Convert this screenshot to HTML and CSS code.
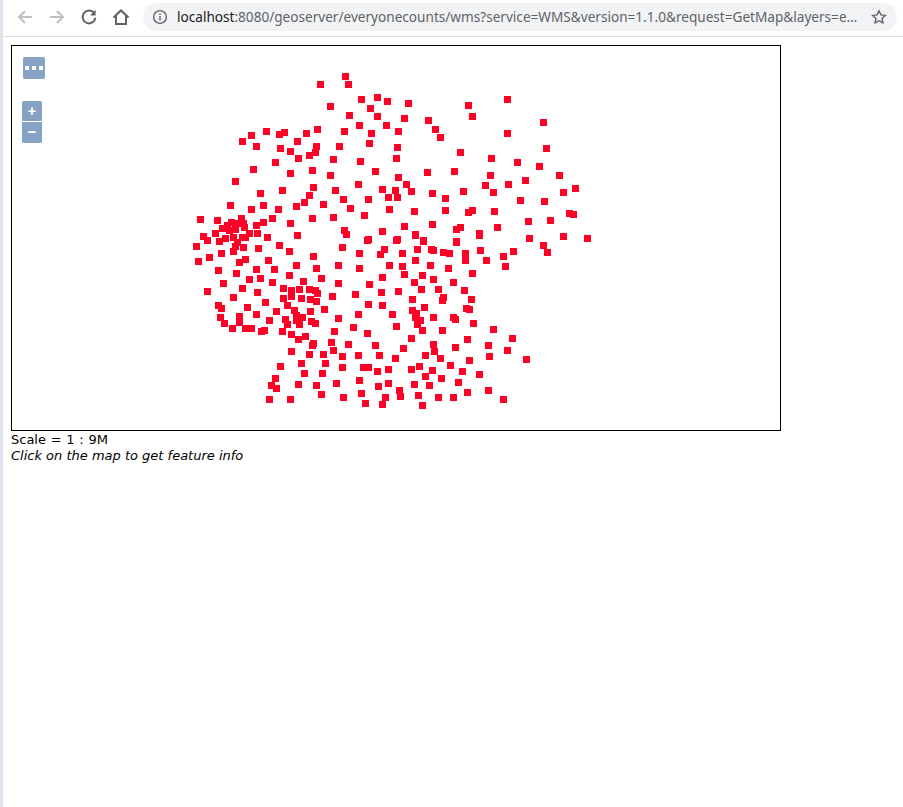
FILE: index.html
```html
<!DOCTYPE html>
<html lang="en">
<head>
    <meta charset="UTF-8">
    <meta name="viewport" content="width=device-width, initial-scale=1.0">
    <title>everyonecounts - OpenLayers map</title>
    <link rel="stylesheet" href="styles.css">
</head>
<body>
    <header class="toolbar">
        <svg class="tool-icon" viewBox="0 0 18 18"><path class="stroke-light" d="M16 9H3M9 3L3 9l6 6"/></svg>
        <svg class="tool-icon" viewBox="0 0 18 18"><path class="stroke-light" d="M2 9h13M9 3l6 6-6 6"/></svg>
        <svg class="tool-icon" viewBox="0 0 18 18"><path class="stroke-dark" d="M14.2 5.2A6.4 6.4 0 1 0 15.4 9.6"/><path class="fill-dark" d="M15.6 1.8v5.6h-5.6z"/></svg>
        <svg class="tool-icon" viewBox="0 0 18 18"><path class="stroke-dark" d="M1.5 9.5L9 2.4l7.5 7.1M4 8v8h10V8"/></svg>
        <div class="omnibox">
            <svg class="info-icon" viewBox="0 0 16 16"><circle class="info-ring" cx="8" cy="8" r="6.4"/><path class="fill-dark" d="M7.3 7h1.4v4.4H7.3zM7.3 4.4h1.4v1.5H7.3z"/></svg>
            <div class="url"><span class="url-host">localhost</span>:8080/geoserver/everyonecounts/wms?service=WMS&amp;version=1.1.0&amp;request=GetMap&amp;layers=e&hellip;</div>
            <svg class="star-icon" viewBox="0 0 16 16"><path class="stroke-star" d="M8 1.8l1.9 4.1 4.4.5-3.3 3 .9 4.5L8 11.7l-3.9 2.2.9-4.5-3.3-3 4.4-.5z"/></svg>
        </div>
    </header>

    <main class="page">
        <div class="map" id="map">
            <svg class="map-points" id="map-points" viewBox="12 46 768 384"></svg>
            <div class="map-btn map-options"><span></span><span></span><span></span></div>
            <div class="map-zoom">
                <div class="map-btn zoom-btn">+</div>
                <div class="map-btn zoom-btn">&minus;</div>
            </div>
        </div>
        <div class="scale">Scale = 1 : 9M</div>
        <div class="hint">Click on the map to get feature info</div>
    </main>

    <script src="map.js"></script>
</body>
</html>
```

FILE: styles.css
```css
html, body {
    height: 100%;
}
body {
    margin: 0;
    box-sizing: border-box;
    border-left: 3px solid #dfe3ec;
    background-color: #fff;
    color: #000;
    font-family: "DejaVu Sans", Verdana, sans-serif;
    font-size: 13px;
    line-height: 16px;
    overflow: hidden;
}
.toolbar {
    display: flex;
    align-items: center;
    gap: 14px;
    height: 34px;
    padding: 0 6px 2px 13px;
    border-bottom: 1px solid #dadce0;
}
.tool-icon {
    width: 18px;
    height: 18px;
    flex: none;
}
.stroke-light, .stroke-dark {
    fill: none;
    stroke-width: 2;
}
.stroke-light {
    stroke: #bcbfc3;
}
.stroke-dark {
    stroke: #5f6368;
}
.fill-dark {
    fill: #5f6368;
}
.omnibox {
    display: flex;
    align-items: center;
    flex: 1;
    height: 28px;
    margin-left: -1px;
    padding: 0 10px 0 9px;
    border-radius: 14px;
    background-color: #f1f3f4;
    font-family: "Noto Sans", "Open Sans", sans-serif;
    font-size: 13.6px;
    color: #5f6368;
    white-space: nowrap;
}
.info-icon {
    width: 16px;
    height: 16px;
    flex: none;
}
.info-ring {
    fill: none;
    stroke: #5f6368;
    stroke-width: 1.4;
}
.url {
    flex: 1;
    margin-left: 9px;
}
.url-host {
    color: #202124;
}
.star-icon {
    width: 16px;
    height: 16px;
    flex: none;
}
.stroke-star {
    fill: none;
    stroke: #5f6368;
    stroke-width: 1.4;
}
.page {
    padding: 8px;
}
.map {
    position: relative;
    width: 768px;
    height: 384px;
    border: 1px solid #000;
}
.map-points {
    display: block;
    width: 768px;
    height: 384px;
}
.map-points rect {
    fill: #ff0026;
}
.map-btn {
    background-color: #86a2c4;
    color: #fff;
}
.map-options {
    position: absolute;
    left: 11px;
    top: 11px;
    display: flex;
    align-items: center;
    justify-content: center;
    gap: 3px;
    width: 22px;
    height: 22px;
    border-radius: 2px;
}
.map-options span {
    width: 4px;
    height: 4px;
    background-color: #fff;
}
.map-zoom {
    position: absolute;
    left: 10px;
    top: 55px;
    display: flex;
    flex-direction: column;
    gap: 1px;
    width: 20px;
}
.zoom-btn {
    height: 20px;
    font-family: "Liberation Sans", Arial, sans-serif;
    font-size: 15px;
    font-weight: bold;
    line-height: 19px;
    text-align: center;
}
.zoom-btn:first-child {
    border-radius: 2px 2px 0 0;
}
.zoom-btn:last-child {
    height: 21px;
    border-radius: 0 0 2px 2px;
}
.scale {
    padding-top: 1px;
    word-spacing: 0.6px;
}
.hint {
    font-style: italic;
}
```

FILE: map.js
```js
// screen positions of the wms points (centre x, centre y)
const points = [
    [345,76],[320,84],[348,84],[361,99],[377,97],[387,101],[330,106],[370,108],[349,115],[377,116],
    [359,125],[386,125],[371,133],[398,131],[266,131],[251,135],[279,134],[284,132],[306,133],[317,129],
    [344,131],[242,141],[256,146],[297,141],[280,148],[290,151],[316,146],[315,152],[309,155],[339,146],
    [369,143],[397,147],[298,158],[275,162],[333,159],[360,161],[396,158],[253,169],[290,173],[312,170],
    [330,175],[375,171],[398,177],[235,181],[313,187],[358,184],[260,193],[282,190],[335,190],[382,189],
    [395,190],[309,195],[343,199],[368,199],[388,197],[397,197],[230,205],[263,205],[304,202],[323,204],
    [251,209],[278,209],[296,206],[350,208],[389,209],[364,215],[200,219],[217,220],[241,218],[272,218],
    [312,218],[333,217],[231,222],[236,223],[243,223],[263,222],[256,225],[290,223],[227,225],[222,228],
    [229,230],[235,229],[244,227],[215,233],[249,233],[257,233],[297,235],[344,230],[346,234],[382,231],
    [203,236],[207,240],[219,241],[225,238],[233,237],[242,237],[245,237],[267,237],[368,239],[397,239],
    [408,103],[468,105],[507,99],[472,116],[404,118],[428,120],[543,122],[435,129],[440,137],[507,133],
    [460,152],[546,148],[491,158],[517,162],[539,166],[427,172],[454,171],[490,175],[559,175],[485,185],
    [508,184],[525,180],[406,184],[411,191],[432,193],[463,191],[493,192],[563,192],[575,188],[445,198],
    [520,200],[544,201],[414,211],[445,210],[468,212],[472,210],[494,211],[569,213],[573,214],[404,226],
    [432,224],[528,221],[550,220],[456,229],[460,227],[497,227],[479,233],[415,234],[423,240],[456,241],
    [529,238],[563,236],[587,238],[237,242],[196,246],[235,246],[243,247],[258,248],[279,245],[289,251],
    [342,247],[359,253],[221,253],[233,251],[313,256],[209,257],[198,261],[245,259],[239,262],[268,260],
    [296,265],[338,265],[316,268],[218,270],[256,269],[274,269],[359,268],[236,273],[289,275],[249,279],
    [260,278],[321,278],[223,283],[272,282],[303,281],[338,283],[242,288],[283,288],[291,290],[299,289],
    [309,289],[315,290],[317,293],[207,291],[257,292],[355,294],[233,297],[291,296],[283,298],[301,298],
    [310,299],[316,301],[332,296],[265,302],[218,305],[221,308],[247,307],[287,305],[324,309],[276,311],
    [294,310],[310,311],[358,314],[256,314],[220,317],[239,316],[296,315],[302,317],[285,319],[269,320],
    [296,320],[338,318],[311,321],[315,323],[224,323],[239,322],[287,324],[299,324],[353,327],[232,328],
    [245,328],[251,328],[261,331],[264,330],[282,331],[334,331],[291,334],[305,336],[298,339],[331,342],
    [348,344],[313,343],[312,345],[291,351],[333,350],[309,354],[323,354],[342,356],[358,355],[301,363],
    [325,363],[280,366],[342,367],[304,373],[322,373],[275,378],[359,380],[271,385],[276,388],[298,384],
    [316,385],[336,383],[321,394],[269,399],[290,399],[343,397],[367,240],[396,240],[415,235],[423,241],
    [456,242],[479,235],[543,245],[547,252],[384,249],[380,254],[402,253],[417,249],[431,249],[433,250],
    [443,252],[449,253],[465,253],[480,250],[513,251],[503,256],[415,260],[465,260],[486,260],[389,265],
    [402,266],[430,265],[448,268],[505,266],[472,273],[382,277],[404,274],[422,275],[433,279],[414,282],
    [453,282],[369,284],[381,292],[398,291],[421,289],[438,289],[464,290],[412,299],[471,299],[443,297],
    [442,300],[368,304],[382,305],[424,307],[412,310],[416,313],[415,317],[392,314],[433,317],[466,308],
    [469,309],[453,317],[455,319],[420,320],[417,324],[473,323],[396,326],[422,330],[442,330],[493,329],
    [367,333],[411,338],[467,339],[512,338],[375,345],[433,344],[488,345],[455,347],[403,348],[507,350],
    [434,351],[379,355],[425,355],[395,358],[440,358],[469,360],[489,356],[526,359],[363,367],[368,367],
    [377,371],[388,369],[411,369],[419,366],[432,370],[450,365],[462,371],[479,374],[425,376],[441,378],
    [458,382],[388,383],[378,386],[414,384],[429,385],[399,390],[361,393],[385,397],[400,396],[418,395],
    [438,397],[453,397],[467,392],[488,390],[365,403],[382,404],[422,405],[503,399]
];

const svg = document.getElementById('map-points');
points.forEach(p => {
    const rect = document.createElementNS('http://www.w3.org/2000/svg', 'rect');
    rect.setAttribute('x', p[0] - 3);
    rect.setAttribute('y', p[1] - 3);
    rect.setAttribute('width', 7);
    rect.setAttribute('height', 7);
    svg.appendChild(rect);
});
```
